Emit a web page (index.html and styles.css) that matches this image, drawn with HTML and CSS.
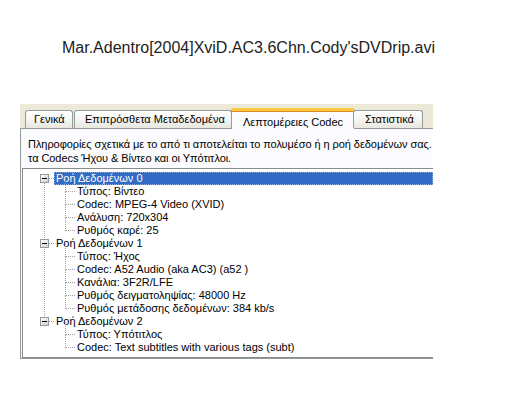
FILE: index.html
```html
<!DOCTYPE html>
<html lang="el">
<head>
    <meta charset="UTF-8">
    <meta name="viewport" content="width=device-width, initial-scale=1.0">
    <title>Mar.Adentro</title>
    <link rel="stylesheet" href="styles.css">
</head>
<body>
    <h1 class="file-title">Mar.Adentro[2004]XviD.AC3.6Chn.Cody'sDVDrip.avi</h1>

    <div class="dialog">
        <div class="tabs">
            <div class="tab">Γενικά</div>
            <div class="tab">Επιπρόσθετα Μεταδεδομένα</div>
            <div class="tab active">Λεπτομέρειες Codec</div>
            <div class="tab">Στατιστικά</div>
        </div>

        <div class="panel">
            <p class="desc">Πληροφορίες σχετικά με το από τι αποτελείται το πολυμέσο ή η ροή δεδομένων σας.<br>τα Codecs Ήχου &amp; Βίντεο και οι Υπότιτλοι.</p>

            <div class="tree">
                <div class="stream">
                    <div class="stream-head selected"><span class="toggle"></span><span class="label">Ροή Δεδομένων 0</span></div>
                    <ul class="props">
                        <li>Τύπος: Βίντεο</li>
                        <li>Codec: MPEG-4 Video (XVID)</li>
                        <li>Ανάλυση: 720x304</li>
                        <li>Ρυθμός καρέ: 25</li>
                    </ul>
                </div>
                <div class="stream">
                    <div class="stream-head"><span class="toggle"></span><span class="label">Ροή Δεδομένων 1</span></div>
                    <ul class="props">
                        <li>Τύπος: Ήχος</li>
                        <li>Codec: A52 Audio (aka AC3) (a52 )</li>
                        <li>Κανάλια: 3F2R/LFE</li>
                        <li>Ρυθμός δειγματοληψίας: 48000 Hz</li>
                        <li>Ρυθμός μετάδοσης δεδομένων: 384 kb/s</li>
                    </ul>
                </div>
                <div class="stream">
                    <div class="stream-head"><span class="toggle"></span><span class="label">Ροή Δεδομένων 2</span></div>
                    <ul class="props">
                        <li>Τύπος: Υπότιτλος</li>
                        <li>Codec: Text subtitles with various tags (subt)</li>
                    </ul>
                </div>
            </div>
        </div>
    </div>
</body>
</html>
```

FILE: styles.css
```css
* {
    margin: 0;
    padding: 0;
    box-sizing: border-box;
}

body {
    background-color: #ffffff;
    color: #000000;
    font-family: 'Liberation Sans', Arial, sans-serif;
    width: 524px;
    height: 408px;
    overflow: hidden;
}

.file-title {
    font-size: 16px;
    font-weight: 400;
    color: #222222;
    padding: 39px 0 0 62px;
    height: 104px;
    white-space: nowrap;
}

/* dialog (cut off on the right) */
.dialog {
    margin-left: 20px;
    width: 413px;
    height: 255px;
    background-color: #ece9d8;
    overflow: hidden;
    font-size: 11px;
}

.tabs {
    display: flex;
    align-items: flex-end;
    height: 24px;
    padding-left: 5px;
    position: relative;
    z-index: 1;
}

.tab {
    height: 18px;
    padding: 0 8px;
    line-height: 17px;
    white-space: nowrap;
    border: 1px solid #919b9c;
    border-bottom: none;
    border-radius: 3px 3px 0 0;
    background: linear-gradient(#ffffff, #f3f3ef 60%, #e7e6df);
    margin-right: 1px;
}

.tab:nth-child(1) { width: 48px; }
.tab:nth-child(2) { width: 158px; padding-left: 10px; }
.tab:nth-child(4) { width: 70px; padding-left: 11px; margin-left: -1px; }

.tab.active {
    width: 124px;
    height: 21px;
    margin: 0 -1px -1px -2px;
    padding-top: 3px;
    padding-left: 11px;
    background: #fcfcfe;
    border-top: 3px solid #ffc83c;
    box-shadow: inset 0 1px 0 #e68b2c;
}

.panel {
    background-color: #fcfcfe;
    border: 1px solid #919b9c;
    border-right: none;
    height: 231px;
    padding-top: 8px;
}

.desc {
    padding-left: 7px;
    line-height: 14px;
    letter-spacing: -0.06px;
    white-space: nowrap;
    height: 31px;
}

.tree {
    margin-left: 1px;
    border: 1px solid #8a8a8a;
    border-right: none;
    background-color: #ffffff;
    padding-top: 3px;
    height: 190px;
}

.stream {
    position: relative;
}

/* vertical line between stream toggles */
.stream:not(:last-child)::before {
    content: "";
    position: absolute;
    left: 21px;
    top: 6px;
    bottom: -7px;
    border-left: 1px dotted #a0a0a0;
}

.stream-head {
    position: relative;
    height: 13px;
    line-height: 13px;
    display: flex;
    align-items: center;
}

.stream-head::after {
    content: "";
    position: absolute;
    left: 26px;
    top: 6px;
    width: 5px;
    border-top: 1px dotted #a0a0a0;
}

.toggle {
    position: relative;
    z-index: 1;
    width: 9px;
    height: 9px;
    margin-left: 17px;
    border: 1px solid #919b9c;
    background: linear-gradient(135deg, #ffffff, #d4d0c8);
}

.toggle::before {
    content: "";
    position: absolute;
    left: 1px;
    top: 3px;
    width: 5px;
    height: 1px;
    background-color: #000000;
}

.label {
    margin-left: 5px;
    padding-left: 2px;
    flex: 1;
    height: 13px;
}

.stream-head.selected .label {
    background-color: #316ac5;
    color: #ffffff;
    outline: 1px dotted #8eaee6;
    outline-offset: -1px;
}

.props {
    list-style: none;
}

.props li {
    position: relative;
    height: 13px;
    line-height: 13px;
    padding-left: 54px;
    white-space: nowrap;
}

.props li::before {
    content: "";
    position: absolute;
    left: 42px;
    top: 6px;
    width: 10px;
    border-top: 1px dotted #a0a0a0;
}

.props li::after {
    content: "";
    position: absolute;
    left: 42px;
    top: -6px;
    height: 13px;
    border-left: 1px dotted #a0a0a0;
}
```
